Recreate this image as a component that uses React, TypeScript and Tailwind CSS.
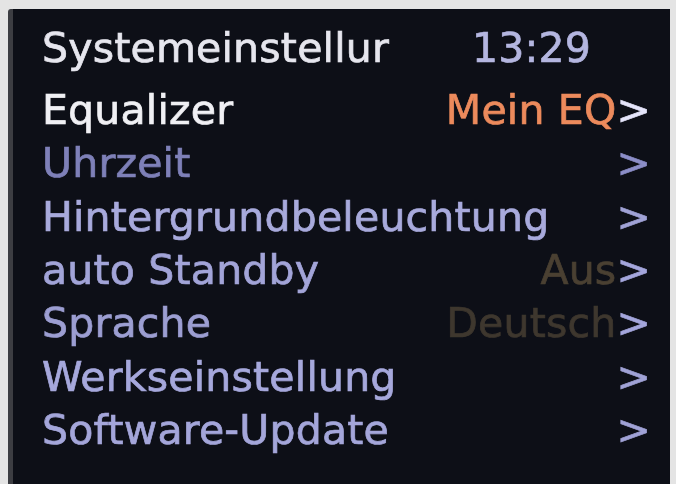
import React from 'react';

interface MenuItem {
  label: string;
  value?: string;
  labelColor: string;
  valueColor?: string;
  arrowColor: string;
}

const items: MenuItem[] = [
  { label: 'Equalizer', value: 'Mein EQ', labelColor: 'text-[#f0f0f4]', valueColor: 'text-[#ec8a5c]', arrowColor: 'text-[#e4e4fa]' },
  { label: 'Uhrzeit', labelColor: 'text-[#7e80b8]', arrowColor: 'text-[#8c8ec8]' },
  { label: 'Hintergrundbeleuchtung', labelColor: 'text-[#a8aadc]', arrowColor: 'text-[#a0a2d6]' },
  { label: 'auto Standby', value: 'Aus', labelColor: 'text-[#a2a4d8]', valueColor: 'text-[#4a4032]', arrowColor: 'text-[#a4a6dc]' },
  { label: 'Sprache', value: 'Deutsch', labelColor: 'text-[#9c9ed2]', valueColor: 'text-[#3e372e]', arrowColor: 'text-[#a4a6dc]' },
  { label: 'Werkseinstellung', labelColor: 'text-[#a6a8dc]', arrowColor: 'text-[#a0a2d6]' },
  { label: 'Software-Update', labelColor: 'text-[#a4a6da]', arrowColor: 'text-[#a0a2d6]' },
];

export default function App() {
  return (
    <div className="w-[676px] h-[484px] overflow-hidden bg-[#e4e4e4] pt-[9px] pl-[8px]">
      <div className="w-[662px] h-[490px] bg-[#0d0f17] border-l-[5px] border-l-[#3c3d42] rounded-tl-[3px] pt-[13px] pl-[29px] pr-[19px] font-['DejaVu_Sans',sans-serif] text-[41px] tracking-[0.2px] [-webkit-text-stroke:0.7px_currentColor] blur-[0.6px]">
        <div className="flex items-center leading-[53px]">
          <span className="w-[430px] overflow-hidden whitespace-nowrap text-[#e6e6ee]">Systemeinstellur</span>
          <span className="text-[#b4b6e0]">13:29</span>
        </div>
        <div className="mt-[9px] flex flex-col">
          {items.map((item) => (
            <div key={item.label} className="flex items-center leading-[53.33px] whitespace-nowrap">
              <span className={`flex-1 ${item.labelColor}`}>{item.label}</span>
              {item.value && <span className={item.valueColor}>{item.value}</span>}
              <span className={item.arrowColor}>&gt;</span>
            </div>
          ))}
        </div>
      </div>
    </div>
  );
}
